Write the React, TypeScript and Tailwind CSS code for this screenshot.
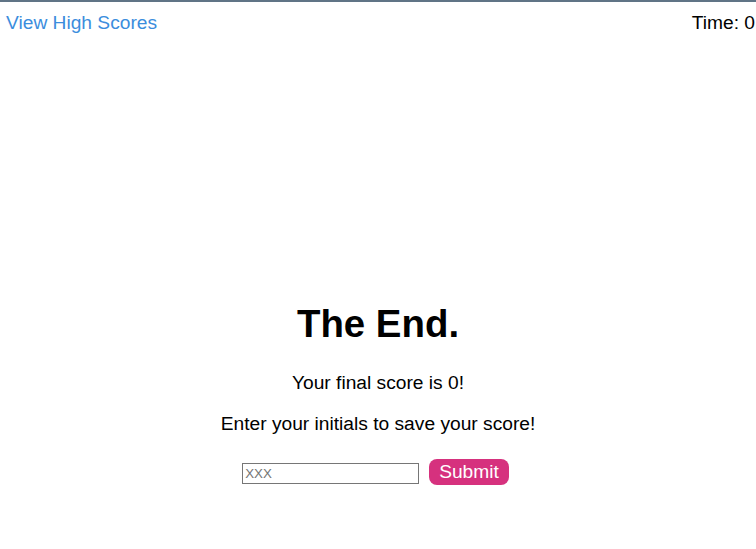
import React from 'react';

const App: React.FC = () => {
  return (
    <div className="min-h-[549px] bg-white border-t-2 border-[#607486] font-['Liberation_Sans',Arial,sans-serif] text-[19.2px] text-black">
      <header className="flex justify-between items-start pt-[10px] pl-[6px] pr-[1px] leading-[22px]">
        <a href="#" className="text-[#3b8ddd]">View High Scores</a>
        <span>Time: 0</span>
      </header>

      <main className="pt-[268px] text-center">
        <h1 className="text-[38.4px] leading-[44px] font-bold mb-[26px]">The End.</h1>
        <p className="leading-[22px]">Your final score is 0!</p>
        <p className="leading-[22px] mt-[19px]">Enter your initials to save your score!</p>
        <div className="flex justify-center items-start gap-[10px] mt-[24px] pr-[5px]">
          <input
            type="text"
            placeholder="XXX"
            className="mt-[4px] w-[177px] h-[21px] border border-[#767676] px-[2px] text-[13.33px] leading-none placeholder:text-[#757575] outline-none"
          />
          <button className="h-[26px] px-[10px] rounded-[8px] bg-[#d6317e] text-white leading-[22px]">
            Submit
          </button>
        </div>
      </main>
    </div>
  );
};

export default App;
